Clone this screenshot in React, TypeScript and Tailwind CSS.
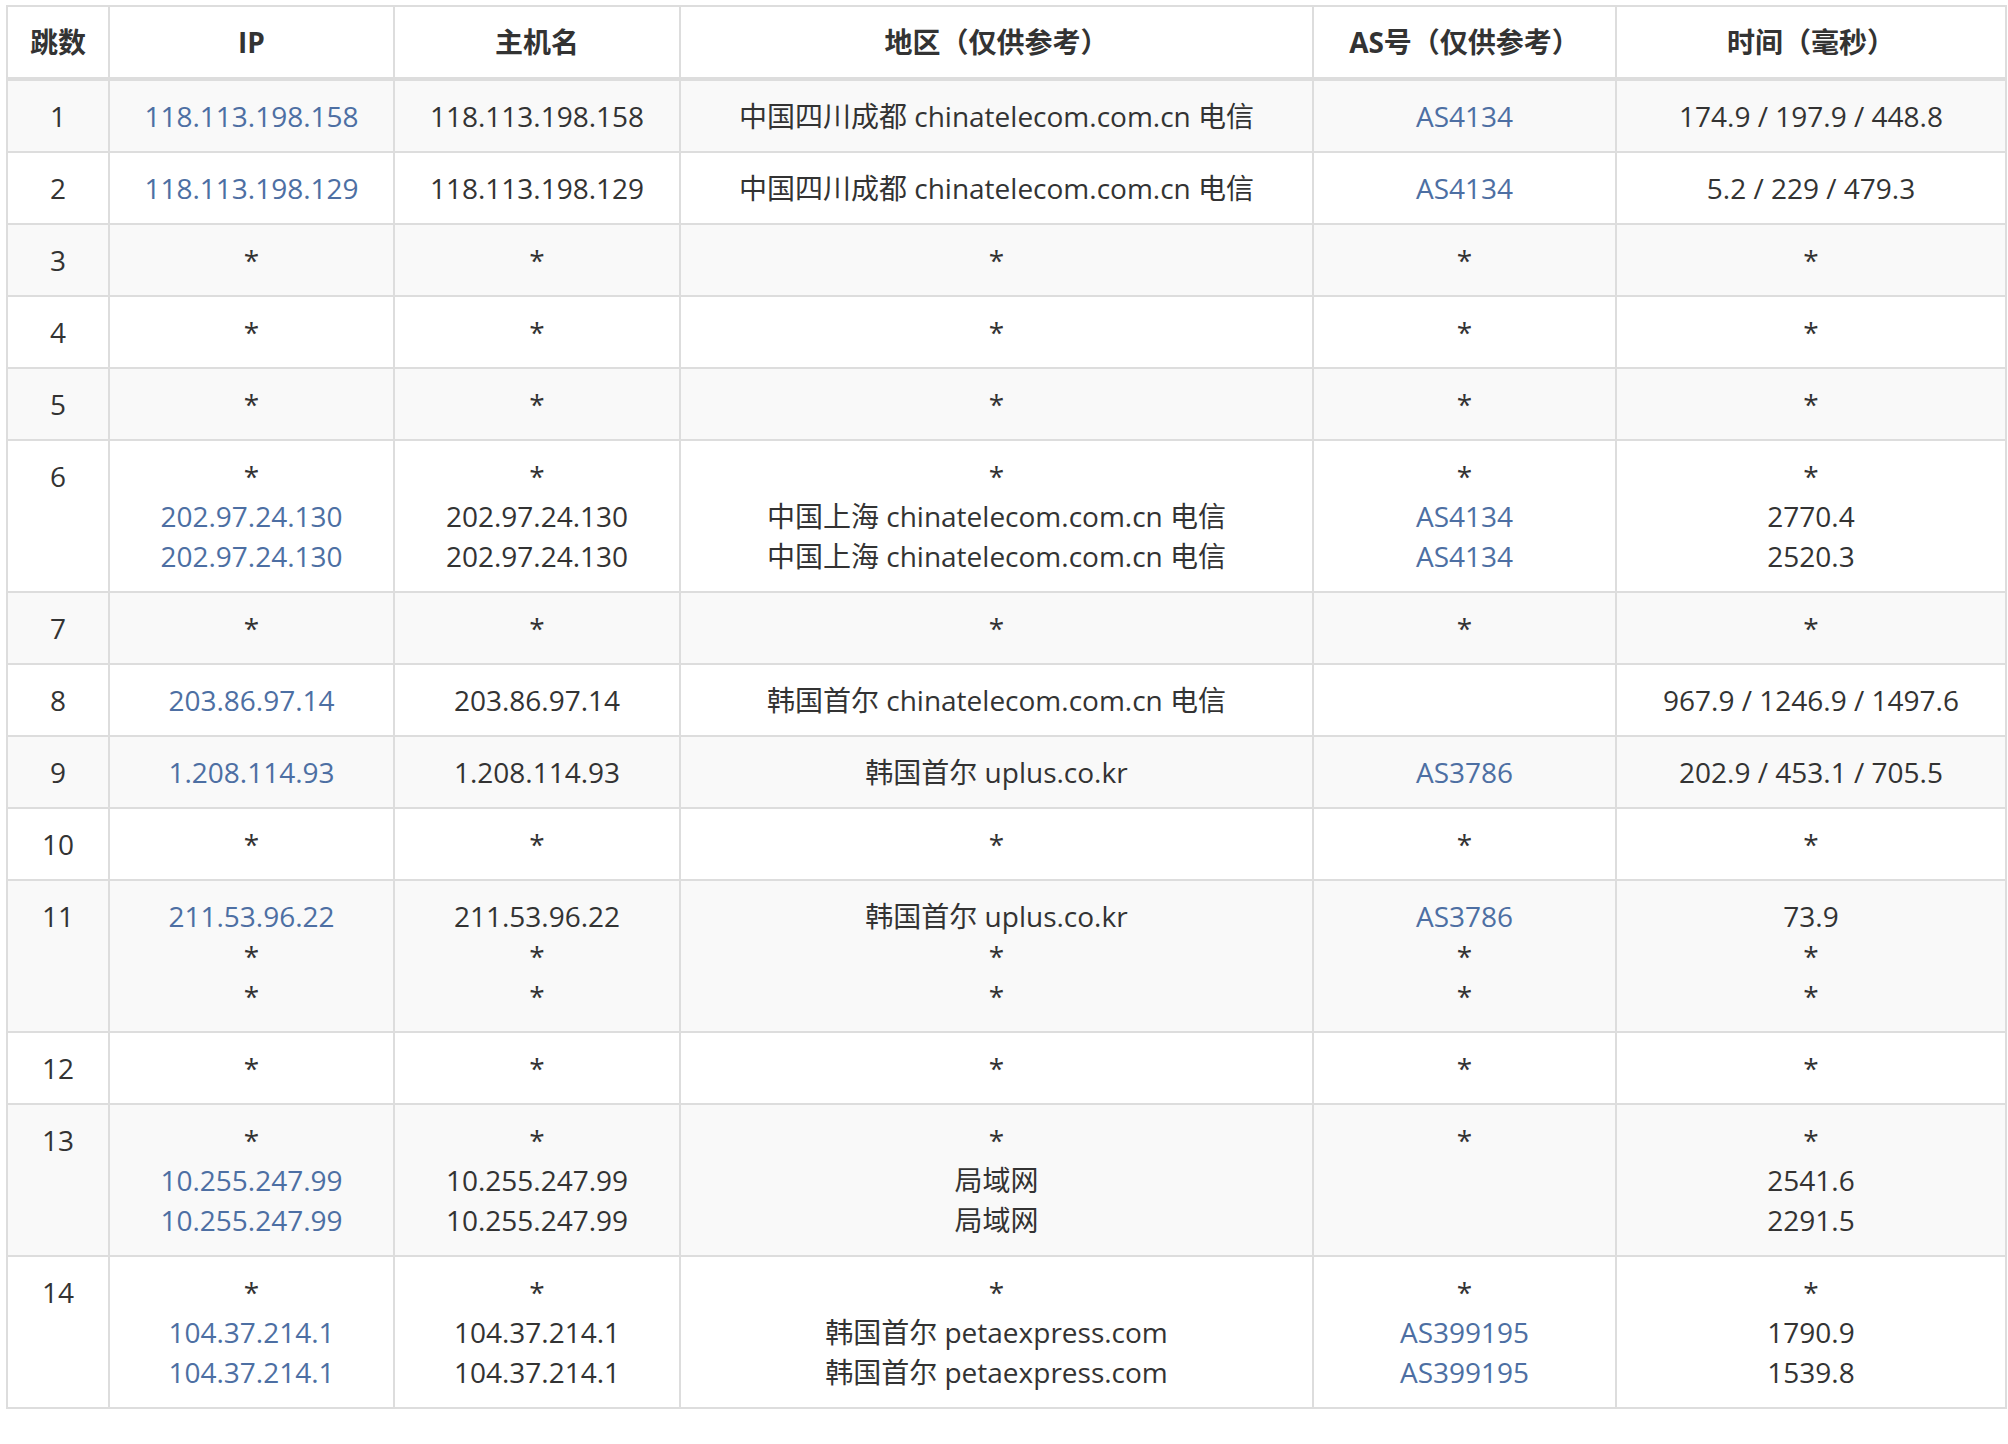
import React from 'react'

type Cell = string[]
type Row = { hop: string; ip: Cell; host: Cell; area: Cell; as: Cell; time: Cell }

const S = ['*']
const star = (hop: string): Row => ({ hop, ip: S, host: S, area: S, as: S, time: S })

const rows: Row[] = [
  { hop: '1', ip: ['118.113.198.158'], host: ['118.113.198.158'], area: ['中国四川成都 chinatelecom.com.cn 电信'], as: ['AS4134'], time: ['174.9 / 197.9 / 448.8'] },
  { hop: '2', ip: ['118.113.198.129'], host: ['118.113.198.129'], area: ['中国四川成都 chinatelecom.com.cn 电信'], as: ['AS4134'], time: ['5.2 / 229 / 479.3'] },
  star('3'),
  star('4'),
  star('5'),
  {
    hop: '6',
    ip: ['*', '202.97.24.130', '202.97.24.130'],
    host: ['*', '202.97.24.130', '202.97.24.130'],
    area: ['*', '中国上海 chinatelecom.com.cn 电信', '中国上海 chinatelecom.com.cn 电信'],
    as: ['*', 'AS4134', 'AS4134'],
    time: ['*', '2770.4', '2520.3'],
  },
  star('7'),
  { hop: '8', ip: ['203.86.97.14'], host: ['203.86.97.14'], area: ['韩国首尔 chinatelecom.com.cn 电信'], as: [''], time: ['967.9 / 1246.9 / 1497.6'] },
  { hop: '9', ip: ['1.208.114.93'], host: ['1.208.114.93'], area: ['韩国首尔 uplus.co.kr'], as: ['AS3786'], time: ['202.9 / 453.1 / 705.5'] },
  star('10'),
  {
    hop: '11',
    ip: ['211.53.96.22', '*', '*'],
    host: ['211.53.96.22', '*', '*'],
    area: ['韩国首尔 uplus.co.kr', '*', '*'],
    as: ['AS3786', '*', '*'],
    time: ['73.9', '*', '*'],
  },
  star('12'),
  {
    hop: '13',
    ip: ['*', '10.255.247.99', '10.255.247.99'],
    host: ['*', '10.255.247.99', '10.255.247.99'],
    area: ['*', '局域网', '局域网'],
    as: ['*'],
    time: ['*', '2541.6', '2291.5'],
  },
  {
    hop: '14',
    ip: ['*', '104.37.214.1', '104.37.214.1'],
    host: ['*', '104.37.214.1', '104.37.214.1'],
    area: ['*', '韩国首尔 petaexpress.com', '韩国首尔 petaexpress.com'],
    as: ['*', 'AS399195', 'AS399195'],
    time: ['*', '1790.9', '1539.8'],
  },
]

function Lines({ items, link }: { items: Cell; link?: boolean }) {
  return (
    <>
      {items.map((t, i) => (
        <div key={i} className={t !== '*' && link ? 'text-[#4d6fa3]' : ''}>
          {t || '\u00a0'}
        </div>
      ))}
    </>
  )
}

const td = 'border-2 border-[#dddddd] px-3 py-[15px] align-top text-center'

export default function App() {
  return (
    <div className="bg-white w-[2008px] h-[1444px] pt-[5px] pl-[6px]" style={{ fontFamily: '"Open Sans", "Noto Sans CJK SC", sans-serif' }}>
      <table className="border-collapse text-[28px] leading-[40px] text-[#333333]">
        <colgroup>
          <col className="w-[102px]" />
          <col className="w-[285px]" />
          <col className="w-[286px]" />
          <col className="w-[633px]" />
          <col className="w-[303px]" />
          <col className="w-[390px]" />
        </colgroup>
        <thead>
          <tr className="font-bold">
            {['跳数', 'IP', '主机名', '地区（仅供参考）', 'AS号（仅供参考）', '时间（毫秒）'].map(h => (
              <th key={h} className="border-2 border-b-4 border-[#dddddd] px-3 py-[15px] text-center">{h}</th>
            ))}
          </tr>
        </thead>
        <tbody>
          {rows.map((r, i) => (
            <tr key={r.hop} className={i % 2 === 0 ? 'bg-[#f9f9f9]' : 'bg-white'}>
              <td className={td}>{r.hop}</td>
              <td className={td}><Lines items={r.ip} link /></td>
              <td className={td}><Lines items={r.host} /></td>
              <td className={td}><Lines items={r.area} /></td>
              <td className={td}><Lines items={r.as} link /></td>
              <td className={td}><Lines items={r.time} /></td>
            </tr>
          ))}
        </tbody>
      </table>
    </div>
  )
}
